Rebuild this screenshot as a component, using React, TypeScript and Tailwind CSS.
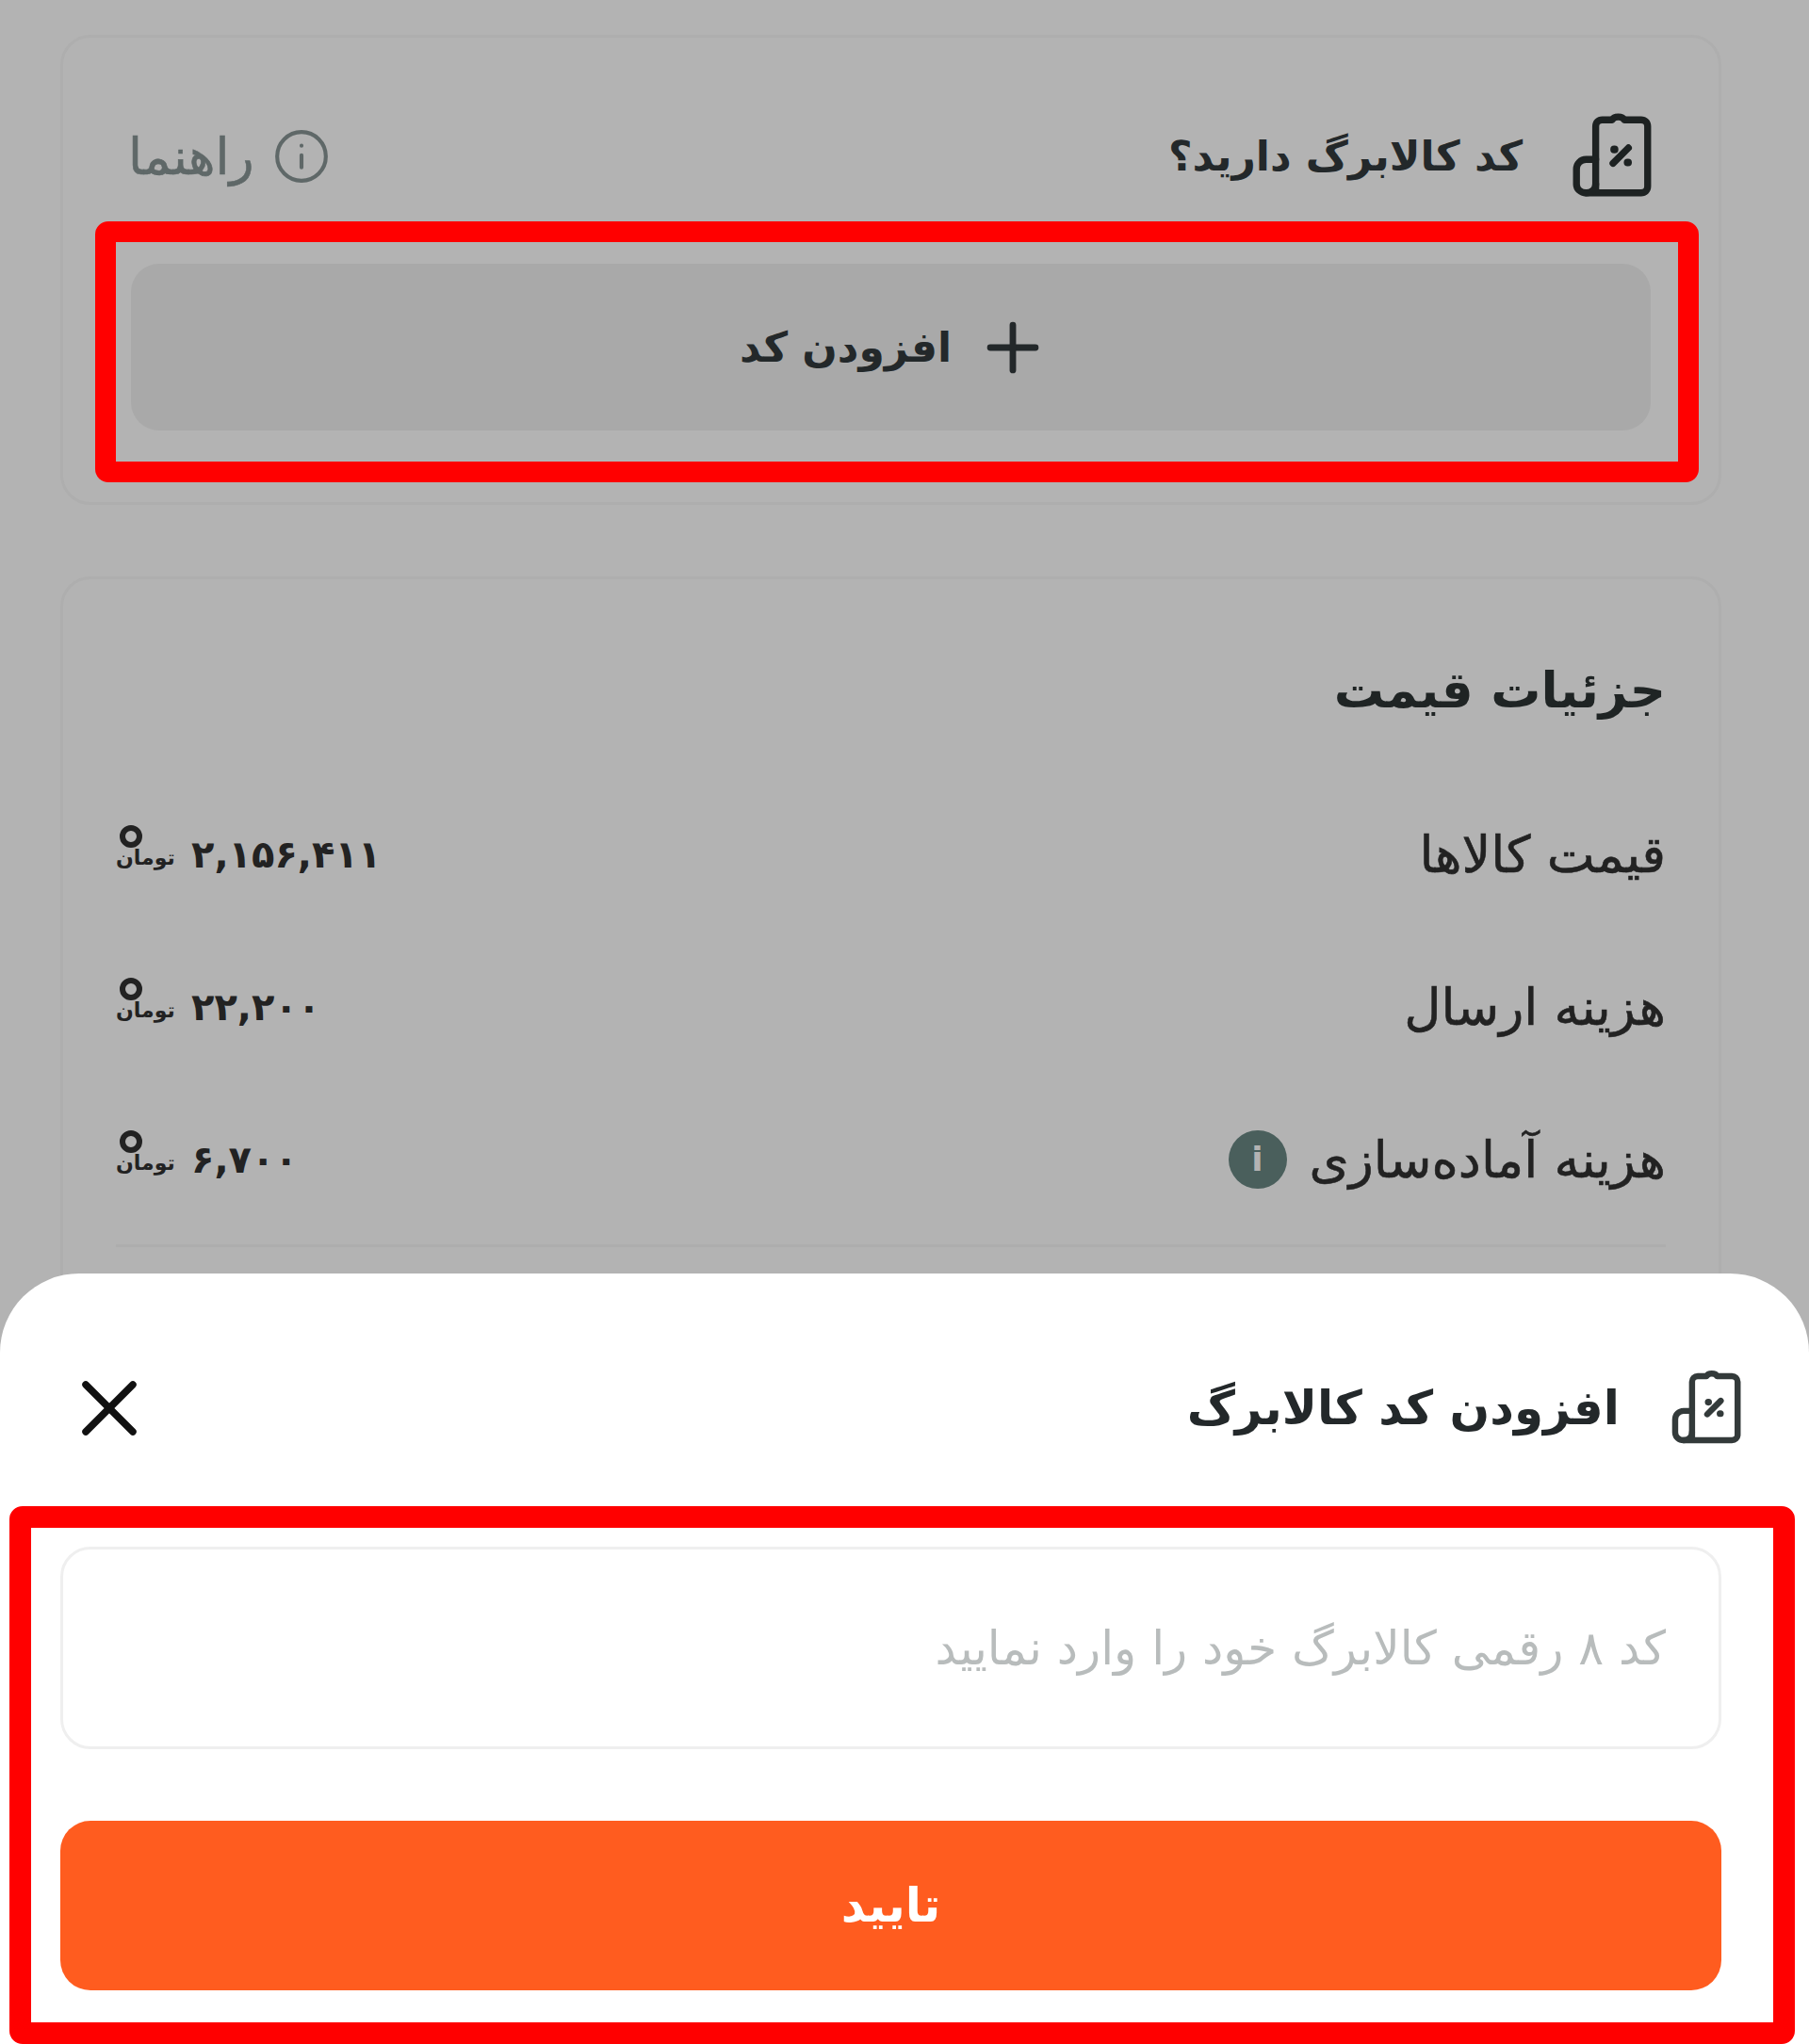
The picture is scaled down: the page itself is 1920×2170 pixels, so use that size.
import { Plus, X } from "lucide-react"

const font = "font-['DejaVu_Sans',sans-serif]"

function CouponIcon({ className }: { className: string }) {
  return (
    <svg viewBox="0 0 24 24" fill="none" stroke="currentColor" strokeWidth="1.8" strokeLinecap="round" strokeLinejoin="round" className={className}>
      <path d="M7.5 21.5V4.2c0-1 .7-1.7 1.7-1.7h2.6c.5-1 2.6-1 3.1 0h4.4c1 0 1.7.7 1.7 1.7v15.6c0 1-.7 1.7-1.7 1.7H5" />
      <path d="M7.5 12.8H5c-1.4 0-2.5 1.1-2.5 2.5v3.9c0 1.3 1.1 2.3 2.5 2.3s2.5-1 2.5-2.3" />
      <path d="M12 13.8l4-4" />
      <path d="M12.3 10.2h.1M15.8 13.6h.1" strokeWidth="2" />
    </svg>
  )
}

function Toman() {
  return (
    <span className="flex w-[60px] flex-col items-end pb-[16px]">
      <span className="ml-[4px] h-[24px] w-[24px] rounded-full border-[6px] border-[#222]" />
      <span className="-mt-[1px] text-[22px] font-bold leading-[24px] text-[#222]">تومان</span>
    </span>
  )
}

function PriceRow({ label, value, info }: { label: string; value: string; info?: boolean }) {
  return (
    <div className="flex h-[162px] items-center justify-between">
      <div className="flex items-center gap-[24px]">
        <span className="text-[54px] text-[#222] [-webkit-text-stroke:0.6px_#222]">{label}</span>
        {info && (
          <span className="flex h-[62px] w-[62px] items-center justify-center rounded-full bg-[#4a5f5c] text-[36px] font-bold text-[#b3b3b3]">i</span>
        )}
      </div>
      <div className="flex items-center gap-[20px]">
        <span dir="ltr" className="text-[40px] font-bold text-[#222]">{value}</span>
        <Toman />
      </div>
    </div>
  )
}

export default function App() {
  return (
    <div dir="rtl" className={`relative flex h-[2170px] w-[1920px] flex-col overflow-hidden bg-[#b3b3b3] ${font}`}>
      <div className="flex h-[1432px] flex-col gap-[76px] overflow-hidden pl-[64px] pr-[93px] pt-[37px]">
        <section className="h-[499px] shrink-0 rounded-[32px] border-[3px] border-[#aeaeae] px-[72px] pt-[76px]">
          <div className="-ml-[3px] -mr-[9px] flex h-[100px] items-center justify-between">
            <div className="flex items-center gap-[47px]">
              <CouponIcon className="h-[98px] w-[98px] text-[#1d2222]" />
              <h2 className="text-[44px] font-bold text-[#23282a]">کد کالابرگ دارید؟</h2>
            </div>
            <div className="flex items-center gap-[19px] text-[#5f6868]">
              <svg viewBox="0 0 24 24" fill="none" stroke="currentColor" strokeWidth="1.6" strokeLinecap="round" className="h-[62px] w-[62px]">
                <circle cx="12" cy="12" r="10" />
                <path d="M12 11.5v5M12 7.6h.01" />
              </svg>
              <span className="text-[54px] [-webkit-text-stroke:0.6px_#5f6868]">راهنما</span>
            </div>
          </div>
          <button className="mt-[64px] flex h-[177px] w-full items-center justify-center gap-[24px] rounded-[30px] bg-[#a9a9a9] pl-[10px] text-[44px] font-bold text-[#23282a]">
            <Plus className="h-[82px] w-[82px]" strokeWidth={2} />
            <span>افزودن کد</span>
          </button>
        </section>

        <section className="shrink-0 rounded-[32px] border-[3px] border-[#aeaeae] px-[56px] pb-[200px] pt-[68px]">
          <h2 className="h-[100px] text-[53px] font-bold leading-[100px] text-[#1f2424]">جزئیات قیمت</h2>
          <div className="mt-[43px]">
            <PriceRow label="قیمت کالاها" value="۲,۱۵۶,۴۱۱" />
            <PriceRow label="هزینه ارسال" value="۲۲,۲۰۰" />
            <PriceRow label="هزینه آماده‌سازی" value="۶,۷۰۰" info />
          </div>
          <div className="mt-[9px] h-[3px] bg-[#adadad]" />
        </section>
      </div>

      <div className="relative -mt-[80px] flex h-[818px] flex-col rounded-t-[84px] bg-white pl-[64px] pr-[93px]">
        <header className="-mr-[28px] flex h-[290px] items-center justify-between pb-[4px] pl-[2px]">
          <div className="flex items-center gap-[50px]">
            <CouponIcon className="h-[86px] w-[86px] text-[#333a3a]" />
            <h2 className="text-[50px] font-bold text-[#23282a]">افزودن کد کالابرگ</h2>
          </div>
          <X className="h-[100px] w-[100px] text-[#111]" strokeWidth={1.8} />
        </header>
        <input
          placeholder="کد ۸ رقمی کالابرگ خود را وارد نمایید"
          className="h-[215px] w-full rounded-[32px] border-[3px] border-[#efefef] bg-white px-[56px] text-[50px] outline-none placeholder:text-[#b8bcbc]"
        />
        <button className="mt-[76px] h-[180px] w-full rounded-[32px] bg-[#ff5c1f] text-[50px] font-bold text-white">تایید</button>
      </div>

      <div className="absolute left-[101px] top-[235px] h-[277px] w-[1702px] rounded-[14px] border-[22px] border-[#ff0000]" />
      <div className="absolute left-[10px] top-[1599px] h-[571px] w-[1895px] rounded-[14px] border-[23px] border-[#ff0000]" />
    </div>
  )
}
